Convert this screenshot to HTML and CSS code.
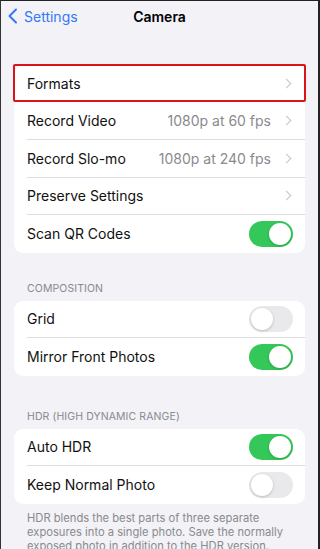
FILE: index.html
```html
<!DOCTYPE html>
<html lang="en">
<head>
<meta charset="utf-8">
<title>Camera</title>
<link rel="stylesheet" href="styles.css">
</head>
<body>
<div class="screen">
  <header class="nav">
    <a class="back">
      <svg class="back-icon" width="11" height="16" viewBox="0 0 11 16"><path d="M9 1.5 L2.5 8 L9 14.5" fill="none" stroke="#3478f6" stroke-width="2" stroke-linecap="round" stroke-linejoin="round"/></svg>
      <span>Settings</span>
    </a>
    <h1 class="title">Camera</h1>
    <span></span>
  </header>

  <section class="group first">
    <div class="row highlighted">
      <span class="label">Formats</span>
      <span class="chev"></span>
    </div>
    <div class="row">
      <span class="label">Record Video</span>
      <span class="value">1080p at 60 fps</span>
      <span class="chev"></span>
    </div>
    <div class="row">
      <span class="label">Record Slo-mo</span>
      <span class="value">1080p at 240 fps</span>
      <span class="chev"></span>
    </div>
    <div class="row">
      <span class="label">Preserve Settings</span>
      <span class="chev"></span>
    </div>
    <div class="row">
      <span class="label">Scan QR Codes</span>
      <span class="toggle on"></span>
    </div>
  </section>

  <h2 class="section-head comp">COMPOSITION</h2>
  <section class="group">
    <div class="row">
      <span class="label">Grid</span>
      <span class="toggle"></span>
    </div>
    <div class="row">
      <span class="label">Mirror Front Photos</span>
      <span class="toggle on"></span>
    </div>
  </section>

  <h2 class="section-head hdr">HDR (HIGH DYNAMIC RANGE)</h2>
  <section class="group">
    <div class="row">
      <span class="label">Auto HDR</span>
      <span class="toggle on"></span>
    </div>
    <div class="row">
      <span class="label">Keep Normal Photo</span>
      <span class="toggle"></span>
    </div>
  </section>
  <p class="footer">HDR blends the best parts of three separate exposures into a single photo. Save the normally exposed photo in addition to the HDR version.</p>
</div>
</body>
</html>
```

FILE: styles.css
```css
* { box-sizing: border-box; }
html, body { margin: 0; padding: 0; }
body {
  width: 320px;
  height: 549px;
  overflow: hidden;
  background: #f2f2f7;
  font-family: Inter, "Noto Sans", "Liberation Sans", sans-serif;
  color: #111;
}
.screen {
  height: 549px;
  border-top: 1px solid #222;
  border-left: 1px solid #333;
  border-right: 2px solid #222;
  overflow: hidden;
}
.nav {
  display: grid;
  grid-template-columns: 1fr auto 1fr;
  align-items: center;
  height: 30px;
}
.back {
  display: flex;
  align-items: center;
  gap: 6px;
  padding-left: 6px;
  color: #3478f6;
  font-size: 14px;
}
.title {
  margin: 0;
  font-size: 14px;
  font-weight: 600;
  color: #000;
}
.group {
  margin: 0 13px 0 13px;
  background: #fff;
  border-radius: 9px;
}
.group.first { margin-top: 34px; }
.row {
  display: flex;
  align-items: center;
  height: 37.5px;
  padding-right: 13px;
  margin-left: 13px;
  border-bottom: 0.8px solid #dedee2;
  font-size: 14px;
}
.row:last-child { border-bottom: none; }
.row.highlighted {
  margin-left: 0;
  padding-left: 13px;
  height: 36px;
  margin-bottom: 1.5px;
  border-bottom: none;
  outline: 2px solid #d9151c;
  outline-offset: -1px;
  border-radius: 1px;
}
.label { flex: 1; color: #111; }
.value { color: #8a8a8e; margin-right: 12px; }
.chev {
  width: 7px;
  height: 7px;
  border-right: 1.5px solid #c4c4c8;
  border-top: 1.5px solid #c4c4c8;
  transform: rotate(45deg);
  margin-right: 2px;
}
.toggle {
  position: relative;
  width: 44px;
  height: 26px;
  border-radius: 13px;
  background: #e9e9eb;
  margin-right: -1px;
}
.toggle::after {
  content: "";
  position: absolute;
  top: 2px;
  left: 2px;
  width: 22px;
  height: 22px;
  border-radius: 50%;
  background: #fff;
  box-shadow: 0 1px 3px rgba(0,0,0,0.2);
}
.toggle.on { background: #34c759; }
.toggle.on::after { left: 20px; }
.section-head {
  margin: 0;
  padding: 0 0 0 26px;
  font-size: 10.5px;
  font-weight: 400;
  color: #8a8a8e;
  letter-spacing: 0.1px;
}
.comp { padding-top: 29px; padding-bottom: 6px; }
.hdr { padding-top: 34px; padding-bottom: 6px; }
.footer {
  margin: 0;
  padding: 7px 20px 0 26px;
  font-size: 11.2px;
  line-height: 14px;
  color: #8a8a8e;
}
```
